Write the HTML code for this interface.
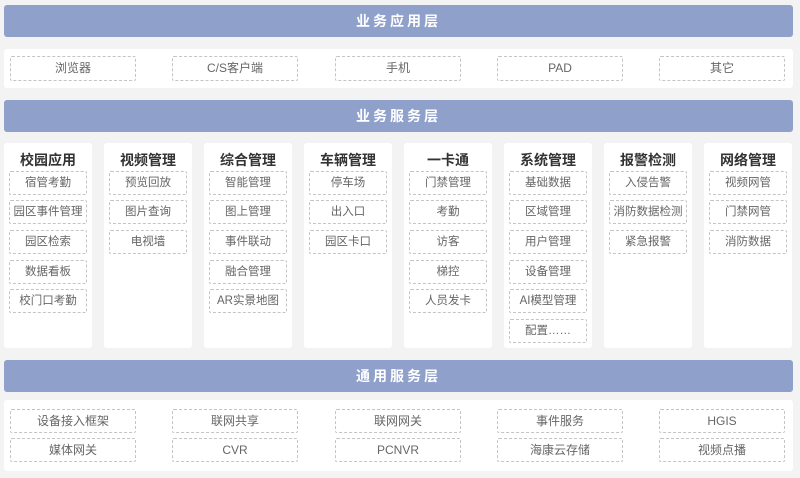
<!DOCTYPE html>
<html><head><meta charset="utf-8"><style>
*{box-sizing:border-box;margin:0;padding:0}
body{width:800px;height:478px;background:#f3f3f3;position:relative;overflow:hidden;font-family:"Liberation Sans","Noto Sans CJK SC",sans-serif}
.hd{position:absolute;left:4px;width:789px;height:32px;background:#8fa0cb;border-radius:3px;color:#fff;font-weight:bold;font-size:14px;letter-spacing:3px;text-align:center;line-height:32px}
.panel{position:absolute;left:4px;width:789px;background:#fff;border-radius:3px}
.b{position:absolute;border:1px dashed #c4c4c4;border-radius:2px;color:#666;font-size:12px;text-align:center}
.col{position:absolute;top:143px;width:88px;height:205px;background:#fff;border-radius:3px}
.col h3{font-size:14px;font-weight:bold;color:#333;text-align:center;margin-top:7px;height:21px;line-height:21px}
.col .i{position:absolute;left:5px;width:78px;height:24px;line-height:22px;border:1px dashed #c4c4c4;border-radius:2px;color:#666;font-size:11.5px;text-align:center;white-space:nowrap}
</style></head><body>
<div class="hd" style="top:5px">业务应用层</div>
<div class="panel" style="top:49px;height:39px"></div>
<div class="b" style="top:56px;left:10px;width:126px;height:25px;line-height:23px">浏览器</div>
<div class="b" style="top:56px;left:172px;width:126px;height:25px;line-height:23px">C/S客户端</div>
<div class="b" style="top:56px;left:335px;width:126px;height:25px;line-height:23px">手机</div>
<div class="b" style="top:56px;left:497px;width:126px;height:25px;line-height:23px">PAD</div>
<div class="b" style="top:56px;left:659px;width:126px;height:25px;line-height:23px">其它</div>
<div class="hd" style="top:100px">业务服务层</div>

<div class="col" style="left:4px"><h3>校园应用</h3>
<div class="i" style="top:28px">宿管考勤</div><div class="i" style="top:57px">园区事件管理</div><div class="i" style="top:87px">园区检索</div><div class="i" style="top:117px">数据看板</div><div class="i" style="top:146px">校门口考勤</div></div>
<div class="col" style="left:104px"><h3>视频管理</h3>
<div class="i" style="top:28px">预览回放</div><div class="i" style="top:57px">图片查询</div><div class="i" style="top:87px">电视墙</div></div>
<div class="col" style="left:204px"><h3>综合管理</h3>
<div class="i" style="top:28px">智能管理</div><div class="i" style="top:57px">图上管理</div><div class="i" style="top:87px">事件联动</div><div class="i" style="top:117px">融合管理</div><div class="i" style="top:146px">AR实景地图</div></div>
<div class="col" style="left:304px"><h3>车辆管理</h3>
<div class="i" style="top:28px">停车场</div><div class="i" style="top:57px">出入口</div><div class="i" style="top:87px">园区卡口</div></div>
<div class="col" style="left:404px"><h3>一卡通</h3>
<div class="i" style="top:28px">门禁管理</div><div class="i" style="top:57px">考勤</div><div class="i" style="top:87px">访客</div><div class="i" style="top:117px">梯控</div><div class="i" style="top:146px">人员发卡</div></div>
<div class="col" style="left:504px"><h3>系统管理</h3>
<div class="i" style="top:28px">基础数据</div><div class="i" style="top:57px">区域管理</div><div class="i" style="top:87px">用户管理</div><div class="i" style="top:117px">设备管理</div><div class="i" style="top:146px">AI模型管理</div><div class="i" style="top:176px">配置……</div></div>
<div class="col" style="left:604px"><h3>报警检测</h3>
<div class="i" style="top:28px">入侵告警</div><div class="i" style="top:57px">消防数据检测</div><div class="i" style="top:87px">紧急报警</div></div>
<div class="col" style="left:704px"><h3>网络管理</h3>
<div class="i" style="top:28px">视频网管</div><div class="i" style="top:57px">门禁网管</div><div class="i" style="top:87px">消防数据</div></div>

<div class="hd" style="top:360px">通用服务层</div>
<div class="panel" style="top:400px;height:71px"></div>
<div class="b" style="top:409px;left:10px;width:126px;height:24px;line-height:22px">设备接入框架</div>
<div class="b" style="top:409px;left:172px;width:126px;height:24px;line-height:22px">联网共享</div>
<div class="b" style="top:409px;left:335px;width:126px;height:24px;line-height:22px">联网网关</div>
<div class="b" style="top:409px;left:497px;width:126px;height:24px;line-height:22px">事件服务</div>
<div class="b" style="top:409px;left:659px;width:126px;height:24px;line-height:22px">HGIS</div>
<div class="b" style="top:438px;left:10px;width:126px;height:24px;line-height:22px">媒体网关</div>
<div class="b" style="top:438px;left:172px;width:126px;height:24px;line-height:22px">CVR</div>
<div class="b" style="top:438px;left:335px;width:126px;height:24px;line-height:22px">PCNVR</div>
<div class="b" style="top:438px;left:497px;width:126px;height:24px;line-height:22px">海康云存储</div>
<div class="b" style="top:438px;left:659px;width:126px;height:24px;line-height:22px">视频点播</div>
</body></html>
